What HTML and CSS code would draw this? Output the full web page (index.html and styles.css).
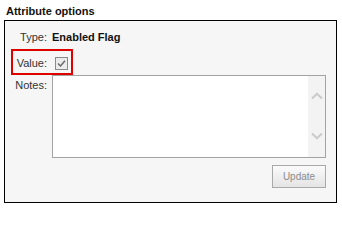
FILE: index.html
```html
<!DOCTYPE html>
<html>
<head>
<meta charset="utf-8">
<link rel="stylesheet" href="styles.css">
</head>
<body>
<div class="title">Attribute options</div>
<div class="box">
  <div class="row row-type">
    <span class="label">Type:</span>
    <span class="value strong">Enabled Flag</span>
  </div>
  <div class="row row-value">
    <span class="label">Value:</span>
    <span class="value">
      <span class="checkbox">
        <svg width="13" height="13" viewBox="0 0 13 13"><path d="M3 6.5 L5.5 9 L10 3.8" fill="none" stroke="#6a6a6a" stroke-width="1.5"/></svg>
      </span>
    </span>
    <span class="highlight"></span>
  </div>
  <div class="row row-notes">
    <span class="label notes-label">Notes:</span>
    <div class="value textarea">
      <textarea class="ta"></textarea>
      <div class="scrollbar">
        <svg width="12" height="8" viewBox="0 0 12 8"><path d="M1 6.5 L6 1.8 L11 6.5" fill="none" stroke="#c9c9c9" stroke-width="2"/></svg>
        <svg width="12" height="8" viewBox="0 0 12 8"><path d="M1 1.5 L6 6.2 L11 1.5" fill="none" stroke="#c9c9c9" stroke-width="2"/></svg>
      </div>
    </div>
  </div>
  <div class="actions">
    <button class="btn" disabled>Update</button>
  </div>
</div>
</body>
</html>
```
FILE: styles.css
```css
html, body {
  margin: 0;
  padding: 0;
  background: #fff;
}
body {
  font-family: "Liberation Sans", Arial, sans-serif;
  font-size: 11px;
  color: #222;
  width: 342px;
  height: 209px;
  overflow: hidden;
}
.title {
  font-weight: bold;
  font-size: 11px;
  line-height: 13px;
  padding: 5px 0 0 6px;
  height: 13px;
  color: #111;
}
.box {
  box-sizing: border-box;
  margin: 2px 0 0 4px;
  width: 333px;
  height: 183px;
  border: 1px solid #000;
  background: #f6f6f6;
  padding: 0 10px 0 0;
  display: flex;
  flex-direction: column;
}
.row {
  display: flex;
  align-items: flex-start;
  position: relative;
}
.label {
  width: 42px;
  flex: none;
  text-align: right;
  line-height: 13px;
  color: #333;
}
.value {
  margin-left: 5px;
  line-height: 13px;
}
.strong {
  font-weight: bold;
  color: #111;
}
.row-type {
  margin-top: 10px;
  height: 13px;
}
.row-value {
  margin-top: 13px;
  height: 13px;
}
.row-value .value {
  margin-left: 8px;
  height: 13px;
}
.checkbox {
  display: block;
  box-sizing: border-box;
  width: 13px;
  height: 13px;
  border: 1px solid #8a8a8a;
  background: #ebebeb;
  position: relative;
}
.checkbox svg {
  position: absolute;
  left: -1px;
  top: -1px;
}
.highlight {
  position: absolute;
  left: 6px;
  top: -8px;
  width: 62px;
  height: 26px;
  box-sizing: border-box;
  border: 2px solid #e00000;
}
.row-notes {
  margin-top: 5px;
}
.notes-label {
  padding-top: 4px;
}
.textarea {
  flex: 1;
  box-sizing: border-box;
  height: 83px;
  border: 1px solid #a3a3a3;
  background: #fff;
  display: flex;
}
.ta {
  flex: 1;
  border: 0;
  margin: 0;
  padding: 2px;
  resize: none;
  outline: none;
  background: #fff;
  font: inherit;
}
.scrollbar {
  width: 17px;
  flex: none;
  background: #f3f3f3;
  display: flex;
  flex-direction: column;
  align-items: center;
  justify-content: space-between;
  padding: 16px 0 17px;
  box-sizing: border-box;
}
.scrollbar svg {
  display: block;
}
.actions {
  display: flex;
  justify-content: flex-end;
  margin-top: 7px;
}
.btn {
  box-sizing: border-box;
  width: 54px;
  height: 23px;
  margin: 0;
  padding: 0;
  border: 1px solid #a9a9a9;
  border-radius: 0;
  background: linear-gradient(#fbfbfb, #e4e4e4);
  font-family: "Liberation Sans", Arial, sans-serif;
  font-size: 10px;
  color: #8c8c8c;
}
```
